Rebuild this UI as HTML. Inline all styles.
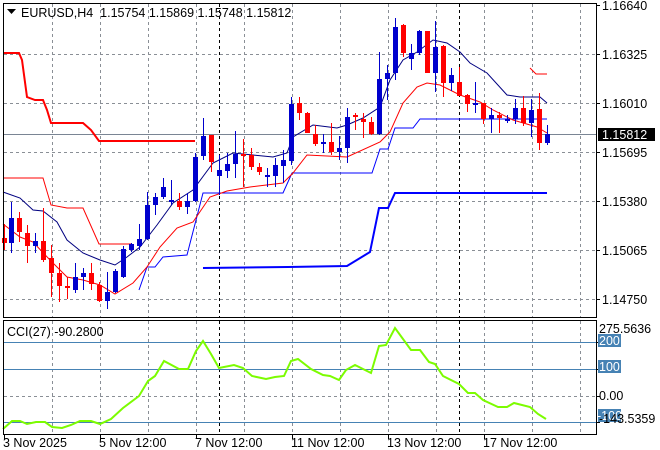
<!DOCTYPE html>
<html><head><meta charset="utf-8"><style>
html,body{margin:0;padding:0;background:#fff;}
svg{display:block;font-family:"Liberation Sans",Tahoma,sans-serif;font-size:12.5px;}
</style></head><body>
<svg width="660" height="450" viewBox="0 0 660 450" xmlns="http://www.w3.org/2000/svg">
<rect width="660" height="450" fill="#fff"/>
<g stroke="#8a8f96" stroke-width="1" stroke-dasharray="3,3" fill="none">
<path d="M52.5 4V317M100.5 4V317M148.5 4V317M196.5 4V317M244.5 4V317M292.5 4V317M340.5 4V317M388.5 4V317M436.5 4V317M484.5 4V317M532.5 4V317M580.5 4V317"/>
<path d="M4 54.5H596M4 103.5H596M4 152.5H596M4 201.5H596M4 250.5H596M4 299.5H596"/>
<path d="M52.5 321V434M100.5 321V434M148.5 321V434M196.5 321V434M244.5 321V434M292.5 321V434M340.5 321V434M388.5 321V434M436.5 321V434M484.5 321V434M532.5 321V434M580.5 321V434"/>
<path d="M4 396.5H596"/>
</g>
<g stroke="#000" stroke-dasharray="3,3"><path d="M219.5 4V317M459.5 4V317M219.5 321V434M459.5 321V434"/></g>
<g stroke="#4682B4"><path d="M4 342.5H596M4 369.5H596M4 422.5H596"/></g>
<line x1="4" y1="134.5" x2="596" y2="134.5" stroke="#7a8594"/>
<g fill="none">
<polyline stroke="#ff0000" stroke-width="2" points="3,53 19,53 22,60 27,97 35,100 43,100 47,110 51,123 83,123 91,130 99,141 195,141"/>
<polyline stroke="#ff0000" stroke-width="1" points="3,178 43,178 51,205 67,208 83,208 99,244 131,244"/>
<polyline stroke="#ff0000" stroke-width="1" points="530,68 536,74 547,74"/>
<polyline stroke="#0000ff" stroke-width="2" points="203,268 288,267 347,266 370,252 379,208 388,208 395,193 547,193"/>
<polyline stroke="#0000ff" stroke-width="1" points="139,290 147,267 155,267 163,257 187,255 203,193 283,193 292,173 372,173 380,149 388,149 395,128 413,128 420,119 547,119"/>
<polyline stroke="#ff0000" stroke-width="1" points="3,224 20,237 33,242 50,260 67,277 83,280 100,285 115,294 133,283 147,267 160,247 177,228 193,222 210,197 227,191 250,187 283,183 293,173 307,155 347,157 380,142 390,132 403,103 417,87 427,83 440,85 460,95 480,102 493,110 513,120 537,127 547,133"/>
<polyline stroke="#000080" stroke-width="1" points="3,192 20,198 33,210 43,211 57,222 67,240 83,253 100,260 115,265 127,257 140,247 157,225 173,203 193,190 213,163 233,153 253,155 273,157 287,153 293,137 313,125 337,128 347,125 363,118 380,107 390,80 403,60 417,52 433,40 447,43 460,52 470,63 487,73 507,95 520,97 540,97 547,103"/>
</g>
<g fill="#ff0000" stroke="#ff0000">
<path fill="none" d="M4.5 224V250M19.5 212V242M27.5 225V263M43.5 208V262M51.5 245V297M59.5 263V302M67.5 277V299M91.5 263V290M99.5 282V302M179.5 193V210M211.5 135V172M243.5 139V187M251.5 148V170M259.5 163V175M299.5 97V120M307.5 112V133M315.5 125V146M331.5 123V155M355.5 113V130M363.5 113V138M371.5 117V135M403.5 24V57M427.5 31V73M443.5 45V97M459.5 67V96M467.5 94V112M483.5 103V124M499.5 112V133M523.5 96V126M539.5 93V150"/>
<g stroke="none">
<rect x="2" y="238" width="5" height="5"/><rect x="17" y="218" width="5" height="14"/><rect x="25" y="233" width="5" height="13"/><rect x="41" y="241" width="5" height="19"/><rect x="49" y="258" width="5" height="15"/><rect x="57" y="273" width="5" height="13"/><rect x="65" y="286" width="5" height="2"/><rect x="89" y="273" width="5" height="11"/><rect x="97" y="285" width="5" height="16"/><rect x="177" y="201" width="5" height="6"/><rect x="209" y="135" width="5" height="27"/><rect x="241" y="154" width="5" height="2"/><rect x="249" y="155" width="5" height="12"/><rect x="257" y="167" width="5" height="5"/><rect x="297" y="103" width="5" height="10"/><rect x="305" y="113" width="5" height="20"/><rect x="313" y="134" width="5" height="10"/><rect x="329" y="142" width="5" height="10"/><rect x="353" y="115" width="5" height="2"/><rect x="361" y="119" width="5" height="3"/><rect x="369" y="122" width="5" height="12"/><rect x="401" y="25" width="5" height="28"/><rect x="425" y="31" width="5" height="42"/><rect x="441" y="46" width="5" height="37"/><rect x="457" y="82" width="5" height="14"/><rect x="465" y="95" width="5" height="9"/><rect x="481" y="103" width="5" height="16"/><rect x="497" y="115" width="5" height="3"/><rect x="521" y="108" width="5" height="15"/><rect x="537" y="109" width="5" height="34"/>
</g></g>
<g fill="#0000cd" stroke="#0000cd">
<path fill="none" d="M11.5 202V253M35.5 233V253M75.5 263V293M83.5 268V290M107.5 272V309M115.5 269V293M123.5 246V278M131.5 243V252M139.5 224V250M147.5 192V240M155.5 193V215M163.5 178V199M171.5 180V205M187.5 193V214M195.5 153V202M203.5 118V160M219.5 155V195M227.5 153V178M235.5 131V178M267.5 168V187M275.5 158V187M283.5 150V183M291.5 97V165M323.5 134V153M339.5 136V160M347.5 108V163M379.5 52V135M387.5 65V100M395.5 18V80M411.5 44V70M419.5 30V55M435.5 21V92M451.5 68V91M475.5 82V113M491.5 108V133M507.5 115V123M515.5 99V124M531.5 99V137M547.5 125V145"/>
<g stroke="none">
<rect x="9" y="218" width="5" height="25"/><rect x="33" y="241" width="5" height="5"/><rect x="73" y="277" width="5" height="13"/><rect x="81" y="273" width="5" height="4"/><rect x="105" y="292" width="5" height="9"/><rect x="113" y="271" width="5" height="21"/><rect x="121" y="249" width="5" height="28"/><rect x="129" y="244" width="5" height="6"/><rect x="137" y="239" width="5" height="7"/><rect x="145" y="205" width="5" height="34"/><rect x="153" y="197" width="5" height="8"/><rect x="161" y="187" width="5" height="10"/><rect x="169" y="200" width="5" height="2"/><rect x="185" y="201" width="5" height="6"/><rect x="193" y="157" width="5" height="44"/><rect x="201" y="136" width="5" height="20"/><rect x="217" y="170" width="5" height="6"/><rect x="225" y="164" width="5" height="7"/><rect x="233" y="154" width="5" height="10"/><rect x="265" y="175" width="5" height="2"/><rect x="273" y="165" width="5" height="11"/><rect x="281" y="160" width="5" height="6"/><rect x="289" y="104" width="5" height="57"/><rect x="321" y="142" width="5" height="2"/><rect x="337" y="148" width="5" height="4"/><rect x="345" y="117" width="5" height="31"/><rect x="377" y="79" width="5" height="55"/><rect x="385" y="73" width="5" height="6"/><rect x="393" y="27" width="5" height="46"/><rect x="409" y="53" width="5" height="6"/><rect x="417" y="31" width="5" height="22"/><rect x="433" y="47" width="5" height="26"/><rect x="449" y="75" width="5" height="8"/><rect x="473" y="103" width="5" height="2"/><rect x="489" y="115" width="5" height="4"/><rect x="505" y="119" width="5" height="2"/><rect x="513" y="108" width="5" height="11"/><rect x="529" y="110" width="5" height="13"/><rect x="545" y="134" width="5" height="9"/>
</g></g>
<polyline fill="none" stroke="#7cfc00" stroke-width="2" points="3,429 12,421 20,421 27,424 36,422 45,422 52,427 62,428 71,425 80,421 91,421 100,424 111,419 123,408 139,396 148,381 155,376 164,361 179,369 188,369 196,351 203,341 211,354 219,368 234,365 243,368 252,376 266,379 275,377 284,376 291,361 298,359 311,369 323,375 330,376 339,380 346,370 355,365 371,373 379,346 386,345 395,328 411,350 420,350 429,362 435,364 443,376 459,384 468,393 475,393 483,400 498,407 507,407 514,403 530,407 538,414 546,419"/>
<g fill="none" stroke="#000"><rect x="3.5" y="3.5" width="593" height="314"/><rect x="3.5" y="320.5" width="593" height="114"/></g>
<g stroke="#000"><path d="M597 5.5h3M597 54.5h3M597 103.5h3M597 152.5h3M597 201.5h3M597 250.5h3M597 299.5h3M597 342.5h3M597 369.5h3M597 396.5h3M597 422.5h3"/>
<path d="M4.5 435v4M100.5 435v4M196.5 435v4M292.5 435v4M388.5 435v4M484.5 435v4"/></g>
<path d="M7 9h9l-4.5 5z" fill="#000"/>
<text x="21" y="17" fill="#000">EURUSD,H4&#160;&#160;1.15754 1.15869 1.15748 1.15812</text>
<text x="7" y="336" fill="#000">CCI(27) -90.2800</text>
<g fill="#000">
<text x="602" y="10">1.16640</text><text x="602" y="59">1.16325</text><text x="602" y="108">1.16010</text><text x="602" y="157">1.15695</text><text x="602" y="206">1.15380</text><text x="602" y="255">1.15065</text><text x="602" y="304">1.14750</text>
</g>
<rect x="598" y="128" width="57" height="13" fill="#000"/>
<text x="602" y="139" fill="#fff">1.15812</text>
<rect x="598" y="334" width="23" height="13" fill="#4682B4"/>
<rect x="598" y="360" width="23" height="13" fill="#4682B4"/>
<rect x="598" y="409" width="23" height="13" fill="#4682B4"/>
<text x="599" y="345" fill="#fff">200</text>
<text x="599" y="371" fill="#fff">100</text>
<text x="597" y="420" fill="#fff">-100</text>
<text x="599" y="333" fill="#000">275.5636</text>
<text x="599" y="400" fill="#000">0.00</text>
<text x="599" y="423" fill="#000">-143.5359</text>
<g fill="#000">
<text x="3" y="447">3 Nov 2025</text><text x="99" y="447">5 Nov 12:00</text><text x="195" y="447">7 Nov 12:00</text><text x="291" y="447">11 Nov 12:00</text><text x="387" y="447">13 Nov 12:00</text><text x="483" y="447">17 Nov 12:00</text>
</g>
</svg>
</body></html>
